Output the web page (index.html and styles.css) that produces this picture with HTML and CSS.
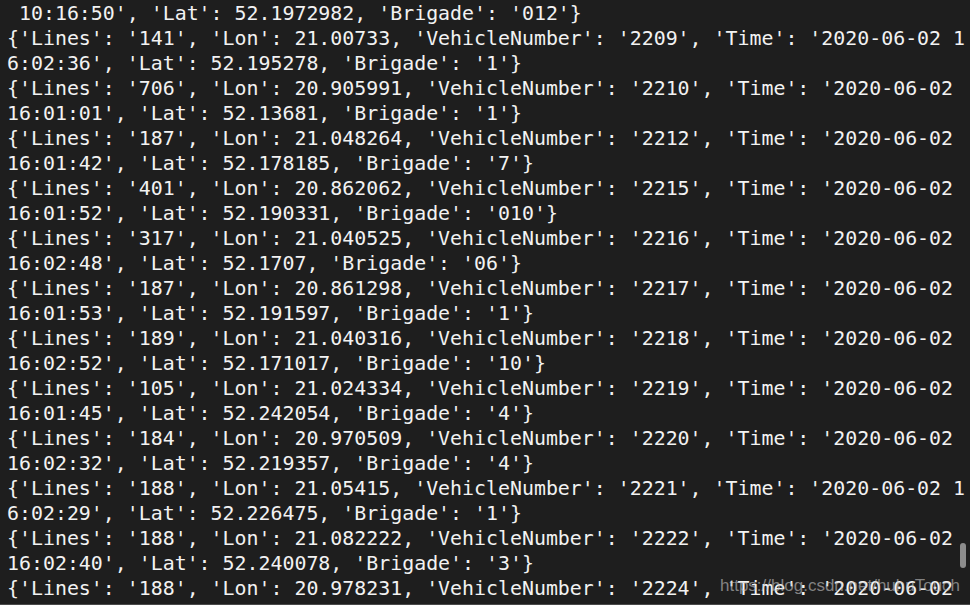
FILE: index.html
```html
<!DOCTYPE html>
<html>
<head>
<meta charset="utf-8">
<link rel="stylesheet" href="styles.css">
</head>
<body>
<div class="term">
<div class="line"> 10:16:50', 'Lat': 52.1972982, 'Brigade': '012'}</div>
<div class="line">{'Lines': '141', 'Lon': 21.00733, 'VehicleNumber': '2209', 'Time': '2020-06-02 1</div>
<div class="line">6:02:36', 'Lat': 52.195278, 'Brigade': '1'}</div>
<div class="line">{'Lines': '706', 'Lon': 20.905991, 'VehicleNumber': '2210', 'Time': '2020-06-02</div>
<div class="line">16:01:01', 'Lat': 52.13681, 'Brigade': '1'}</div>
<div class="line">{'Lines': '187', 'Lon': 21.048264, 'VehicleNumber': '2212', 'Time': '2020-06-02</div>
<div class="line">16:01:42', 'Lat': 52.178185, 'Brigade': '7'}</div>
<div class="line">{'Lines': '401', 'Lon': 20.862062, 'VehicleNumber': '2215', 'Time': '2020-06-02</div>
<div class="line">16:01:52', 'Lat': 52.190331, 'Brigade': '010'}</div>
<div class="line">{'Lines': '317', 'Lon': 21.040525, 'VehicleNumber': '2216', 'Time': '2020-06-02</div>
<div class="line">16:02:48', 'Lat': 52.1707, 'Brigade': '06'}</div>
<div class="line">{'Lines': '187', 'Lon': 20.861298, 'VehicleNumber': '2217', 'Time': '2020-06-02</div>
<div class="line">16:01:53', 'Lat': 52.191597, 'Brigade': '1'}</div>
<div class="line">{'Lines': '189', 'Lon': 21.040316, 'VehicleNumber': '2218', 'Time': '2020-06-02</div>
<div class="line">16:02:52', 'Lat': 52.171017, 'Brigade': '10'}</div>
<div class="line">{'Lines': '105', 'Lon': 21.024334, 'VehicleNumber': '2219', 'Time': '2020-06-02</div>
<div class="line">16:01:45', 'Lat': 52.242054, 'Brigade': '4'}</div>
<div class="line">{'Lines': '184', 'Lon': 20.970509, 'VehicleNumber': '2220', 'Time': '2020-06-02</div>
<div class="line">16:02:32', 'Lat': 52.219357, 'Brigade': '4'}</div>
<div class="line">{'Lines': '188', 'Lon': 21.05415, 'VehicleNumber': '2221', 'Time': '2020-06-02 1</div>
<div class="line">6:02:29', 'Lat': 52.226475, 'Brigade': '1'}</div>
<div class="line">{'Lines': '188', 'Lon': 21.082222, 'VehicleNumber': '2222', 'Time': '2020-06-02</div>
<div class="line">16:02:40', 'Lat': 52.240078, 'Brigade': '3'}</div>
<div class="line">{'Lines': '188', 'Lon': 20.978231, 'VehicleNumber': '2224', 'Time': '2020-06-02</div>
<div class="scrollbar"></div>
<div class="watermark">https://blog.csdn.net/huhuTouch</div>
</div>
</body>
</html>
```
FILE: styles.css
```css
html, body {
  margin: 0;
  padding: 0;
  background: #1e1e1e;
}
.term {
  position: relative;
  box-sizing: border-box;
  width: 970px;
  height: 605px;
  overflow: hidden;
  background: #1e1e1e;
  padding: 1px 0 0 7px;
  border-bottom: 1px solid #4a4a4a;
  font-family: "DejaVu Sans Mono", monospace;
  font-size: 19.9px;
  line-height: 25px;
  color: #f2f2f2;
}
.line {
  white-space: pre;
  height: 25px;
}
.scrollbar {
  position: absolute;
  right: 4px;
  top: 543px;
  width: 6px;
  height: 25px;
  border-radius: 3px;
  background: #8c8c8c;
}
.watermark {
  position: absolute;
  left: 720px;
  top: 576px;
  font-family: "Liberation Sans", Arial, sans-serif;
  font-size: 17px;
  line-height: 20px;
  color: rgba(200, 200, 200, 0.6);
  white-space: nowrap;
}
```
